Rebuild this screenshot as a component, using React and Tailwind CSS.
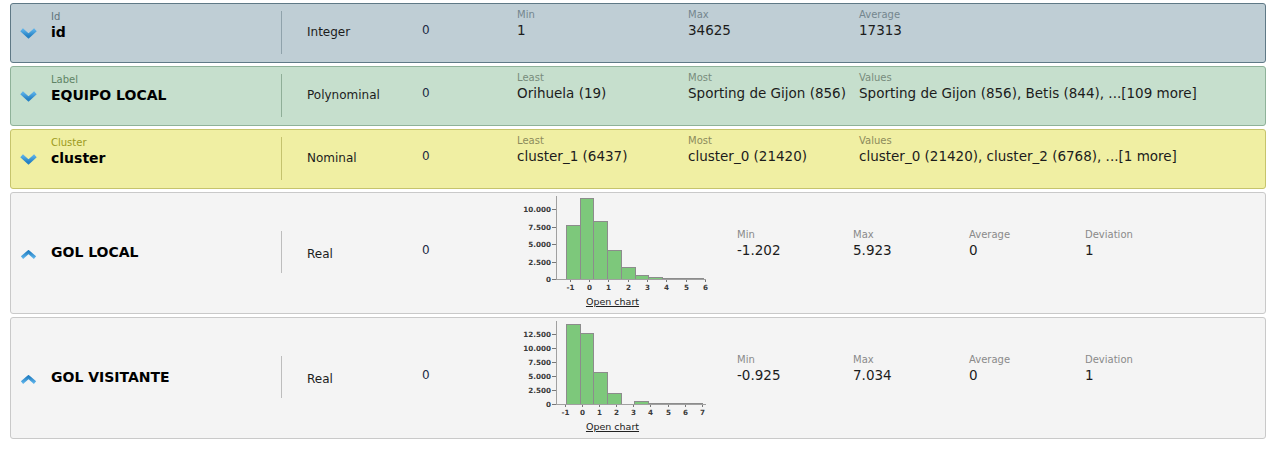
import React from "react";

function ChevronDown() {
  return (
    <svg width="17" height="12" viewBox="0 0 17 12" className="block">
      <defs>
        <linearGradient id="cdg" x1="0" y1="0" x2="0" y2="1">
          <stop offset="0" stopColor="#5ab0e8" />
          <stop offset="1" stopColor="#2581c4" />
        </linearGradient>
      </defs>
      <path d="M1.6 2.8 L8.5 9 L15.4 2.8" fill="none" stroke="url(#cdg)" strokeWidth="4" strokeLinejoin="miter" />
    </svg>
  );
}

function ChevronUp() {
  return (
    <svg width="17" height="9" viewBox="0 0 17 9" className="block">
      <defs>
        <linearGradient id="cug" x1="0" y1="0" x2="0" y2="1">
          <stop offset="0" stopColor="#2581c4" />
          <stop offset="1" stopColor="#5ab0e8" />
        </linearGradient>
      </defs>
      <path d="M2 7.6 L8.5 2 L15 7.6" fill="none" stroke="url(#cug)" strokeWidth="3.4" strokeLinejoin="miter" />
    </svg>
  );
}

function Histogram({ yTicks, yScale, xTicks, xOrigin, xUnit, start, bin, counts }) {
  const base = 84;
  const xOf = (v) => xOrigin + v * xUnit;
  return (
    <svg width="200" height="98" viewBox="0 0 200 98" className="block">
      {counts.map((c, i) => {
        if (c <= 0) return null;
        const x1 = Math.round(xOf(start + i * bin)) + 0.5;
        const x2 = Math.round(xOf(start + (i + 1) * bin)) + 0.5;
        const h = Math.max(1, Math.round(c * yScale));
        return (
          <rect key={i} x={x1} y={base - h + 0.5} width={x2 - x1} height={h} fill="#7dc87b" stroke="#8c8c8c" strokeWidth="1" />
        );
      })}
      <line x1="41.5" y1="1" x2="41.5" y2="84.5" stroke="#a0a0a0" strokeWidth="1" />
      <line x1="41" y1="84.5" x2="191" y2="84.5" stroke="#a0a0a0" strokeWidth="1" />
      {yTicks.map((t) => {
        const y = Math.round(base - t.v * yScale) + 0.5;
        return (
          <g key={t.l}>
            <line x1="37" y1={y} x2="41" y2={y} stroke="#777" strokeWidth="1" />
            <text x="36" y={y + 2.6} textAnchor="end" fontSize="7.2" fontWeight="bold" fill="#3a3a3a" fontFamily="DejaVu Sans, sans-serif">
              {t.l}
            </text>
          </g>
        );
      })}
      {xTicks.map((v) => {
        const x = Math.round(xOf(v)) + 0.5;
        return (
          <g key={v}>
            <line x1={x} y1="85" x2={x} y2="87" stroke="#777" strokeWidth="1" />
            <text x={x} y="94.8" textAnchor="middle" fontSize="7.2" fontWeight="bold" fill="#3a3a3a" fontFamily="DejaVu Sans, sans-serif">
              {v}
            </text>
          </g>
        );
      })}
    </svg>
  );
}

function Stat({ label, value, labelColor, w, top }) {
  return (
    <div className={`${w} shrink-0 ${top}`}>
      <div className={`text-[10px] leading-[12px] ${labelColor}`}>{label}</div>
      <div className="text-[13.5px] leading-[16px] mt-[1px] text-[#1c1c1c] whitespace-nowrap">{value}</div>
    </div>
  );
}

function NominalRow({ theme, role, name, type, stats }) {
  return (
    <div className={`flex h-[60px] rounded-[3px] border ${theme.bg} ${theme.border}`}>
      <div className="w-[40px] shrink-0 pl-[9px] pt-[23px]">
        <ChevronDown />
      </div>
      <div className="w-[230px] shrink-0 pt-[7px]">
        <div className={`text-[10px] leading-[12px] ${theme.role}`}>{role}</div>
        <div className="text-[14px] leading-[18px] font-bold text-black">{name}</div>
      </div>
      <div className={`w-px h-[43px] mt-[7px] shrink-0 ${theme.div}`} />
      <div className="w-[140px] shrink-0 pl-[25px] pt-[21px] text-[12px] leading-[14px] text-[#1c1c1c]">{type}</div>
      <div className="w-[95px] shrink-0 pt-[19px] text-[12px] leading-[14px] text-[#1c2a44]">0</div>
      {stats.map((s) => (
        <Stat key={s[0]} label={s[0]} value={s[1]} labelColor={theme.label} w="w-[171px]" top="pt-[5px]" />
      ))}
    </div>
  );
}

function RealRow({ name, stats, chart }) {
  return (
    <div className="flex h-[122px] rounded-[3px] border bg-[#f4f4f4] border-[#c9c9c9]">
      <div className="w-[40px] shrink-0 pl-[9px] pt-[57px]">
        <ChevronUp />
      </div>
      <div className="w-[230px] shrink-0 pt-[50px]">
        <div className="text-[14px] leading-[18px] font-bold text-black">{name}</div>
      </div>
      <div className="w-px h-[42px] mt-[38px] shrink-0 bg-[#bdbdbd]" />
      <div className="w-[140px] shrink-0 pl-[25px] pt-[54px] text-[12px] leading-[14px] text-[#1c1c1c]">Real</div>
      <div className="w-[93px] shrink-0 pt-[50px] text-[12px] leading-[14px] text-[#1c2a44]">0</div>
      <div className="w-[222px] shrink-0 pt-[2px]">
        <Histogram {...chart} />
        <div className="w-[195px] text-center text-[9.5px] leading-[12px] mt-[3px] text-[#222]">
          <span className="underline">Open chart</span>
        </div>
      </div>
      {stats.map((s) => (
        <div key={s[0]} className="w-[116px] shrink-0 pt-[36px]">
          <div className="text-[10px] leading-[12px] text-[#8a8a8a]">{s[0]}</div>
          <div className="text-[13.5px] leading-[16px] mt-[1px] text-[#1c1c1c]">{s[1]}</div>
        </div>
      ))}
    </div>
  );
}

export default function App() {
  const blue = { bg: "bg-[#bfced5]", border: "border-[#5f7986]", div: "bg-[#8fa2ab]", role: "text-[#5f737c]", label: "text-[#74868e]" };
  const green = { bg: "bg-[#c6dfcd]", border: "border-[#8fb299]", div: "bg-[#8fae98]", role: "text-[#5f8465]", label: "text-[#788c7c]" };
  const yellow = { bg: "bg-[#f0efa3]", border: "border-[#c6c46c]", div: "bg-[#c4c26e]", role: "text-[#9c9a1c]", label: "text-[#8c8b5c]" };

  const chart1 = {
    yTicks: [
      { v: 0, l: "0" },
      { v: 2500, l: "2.500" },
      { v: 5000, l: "5.000" },
      { v: 7500, l: "7.500" },
      { v: 10000, l: "10.000" },
    ],
    yScale: 0.00696,
    xTicks: [-1, 0, 1, 2, 3, 4, 5, 6],
    xOrigin: 74,
    xUnit: 19.3,
    start: -1.202,
    bin: 0.7125,
    counts: [7700, 11600, 8400, 4200, 1750, 600, 250, 100, 60, 30],
  };
  const chart2 = {
    yTicks: [
      { v: 0, l: "0" },
      { v: 2500, l: "2.500" },
      { v: 5000, l: "5.000" },
      { v: 7500, l: "7.500" },
      { v: 10000, l: "10.000" },
      { v: 12500, l: "12.500" },
    ],
    yScale: 0.0056,
    xTicks: [-1, 0, 1, 2, 3, 4, 5, 6, 7],
    xOrigin: 67,
    xUnit: 17.1,
    start: -0.925,
    bin: 0.7959,
    counts: [14300, 12700, 5700, 2000, 0, 600, 120, 40, 20, 10],
  };

  return (
    <div className="min-h-[469px] bg-white px-[10px] pt-[3px] flex flex-col gap-[3px] font-[family-name:DejaVu_Sans,Verdana,sans-serif]">
      <NominalRow theme={blue} role="Id" name="id" type="Integer" stats={[["Min", "1"], ["Max", "34625"], ["Average", "17313"]]} />
      <NominalRow
        theme={green}
        role="Label"
        name="EQUIPO LOCAL"
        type="Polynominal"
        stats={[["Least", "Orihuela (19)"], ["Most", "Sporting de Gijon (856)"], ["Values", "Sporting de Gijon (856), Betis (844), ...[109 more]"]]}
      />
      <NominalRow
        theme={yellow}
        role="Cluster"
        name="cluster"
        type="Nominal"
        stats={[["Least", "cluster_1 (6437)"], ["Most", "cluster_0 (21420)"], ["Values", "cluster_0 (21420), cluster_2 (6768), ...[1 more]"]]}
      />
      <RealRow name="GOL LOCAL" chart={chart1} stats={[["Min", "-1.202"], ["Max", "5.923"], ["Average", "0"], ["Deviation", "1"]]} />
      <RealRow name="GOL VISITANTE" chart={chart2} stats={[["Min", "-0.925"], ["Max", "7.034"], ["Average", "0"], ["Deviation", "1"]]} />
    </div>
  );
}
